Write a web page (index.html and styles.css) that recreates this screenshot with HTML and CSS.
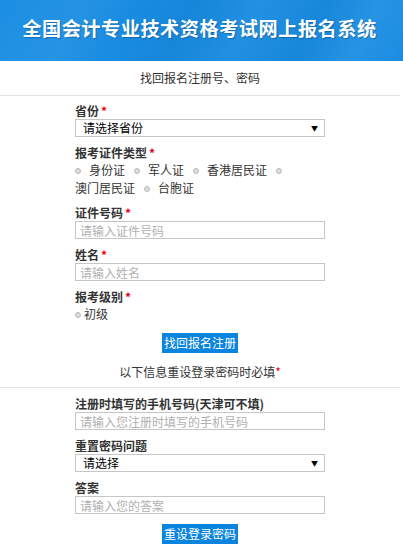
FILE: index.html
```html
<!DOCTYPE html>
<html lang="zh-CN">
<head>
<meta charset="utf-8">
<title>全国会计专业技术资格考试网上报名系统</title>
<link rel="stylesheet" href="styles.css">
</head>
<body>
<header class="top">
  <h1 class="title">全国会计专业技术资格考试网上报名系统</h1>
</header>
<main class="page">
  <div class="subtitle">找回报名注册号、密码</div>
  <form class="form">
    <div class="group">
      <div class="label">省份<span class="req">*</span></div>
      <div class="sel"><select class="field select"><option>请选择省份</option></select></div>
    </div>
    <div class="group">
      <div class="label">报考证件类型<span class="req">*</span></div>
      <div class="radios"><input class="rd" type="radio" name="t"><span class="opt">身份证</span><input class="rd" type="radio" name="t"><span class="opt">军人证</span><input class="rd" type="radio" name="t"><span class="opt">香港居民证</span><input class="rd" type="radio" name="t"><span class="opt">澳门居民证</span><input class="rd" type="radio" name="t"><span class="opt">台胞证</span></div>
    </div>
    <div class="group">
      <div class="label">证件号码<span class="req">*</span></div>
      <input class="field input" type="text" placeholder="请输入证件号码">
    </div>
    <div class="group">
      <div class="label">姓名<span class="req">*</span></div>
      <input class="field input" type="text" placeholder="请输入姓名">
    </div>
    <div class="group">
      <div class="label">报考级别<span class="req">*</span></div>
      <div class="radios"><input class="rd rd-tight" type="radio" name="l"><span class="opt">初级</span></div>
    </div>
    <div class="actions"><button class="btn" type="button">找回报名注册</button></div>
  </form>
  <div class="note">以下信息重设登录密码时必填<span class="req req-tight">*</span></div>
  <form class="form form-second">
    <div class="group">
      <div class="label">注册时填写的手机号码(天津可不填)</div>
      <input class="field input" type="text" placeholder="请输入您注册时填写的手机号码">
    </div>
    <div class="group">
      <div class="label">重置密码问题</div>
      <div class="sel"><select class="field select"><option>请选择</option></select></div>
    </div>
    <div class="group">
      <div class="label">答案</div>
      <input class="field input" type="text" placeholder="请输入您的答案">
    </div>
    <div class="actions"><button class="btn" type="button">重设登录密码</button></div>
  </form>
</main>
</body>
</html>
```
FILE: styles.css
```css
* { box-sizing: border-box; }
html, body { margin: 0; padding: 0; background: #fff; }
body {
  font-family: "Noto Sans CJK SC", "Noto Sans", sans-serif;
  font-size: 12px;
  color: #333;
}
.top {
  height: 61px;
  background:
    linear-gradient(118deg, rgba(255,255,255,0) 0%, rgba(255,255,255,0.05) 20%, rgba(255,255,255,0) 32%, rgba(0,0,0,0.03) 45%, rgba(255,255,255,0.05) 60%, rgba(0,0,0,0.03) 75%, rgba(255,255,255,0.06) 88%, rgba(255,255,255,0) 100%),
    linear-gradient(90deg, #1c8fe3 0%, #168ae0 50%, #1a8de2 100%);
  display: flex;
  justify-content: center;
  padding-top: 13px;
}
.title {
  margin: 0;
  color: #fff;
  font-size: 19.2px;
  letter-spacing: 0.5px;
  line-height: 30px;
  font-weight: bold;
  text-shadow: 1px 1px 1px rgba(0, 40, 90, 0.35);
  padding-right: 4px;
}
.page { width: 400px; }
.subtitle {
  height: 35px;
  line-height: 34px;
  text-align: center;
  border-bottom: 1px solid #e4e4e4;
  color: #333;
}
.form { width: 250px; margin: 0 75px; padding-top: 7px; }
.form-second { padding-top: 8px; }
.group { margin-bottom: 8px; }
.label {
  font-weight: bold;
  line-height: 16px;
  color: #333;
}
.req { color: #e60012; font-weight: bold; margin-left: 2px; }
.req-tight { margin-left: 0; font-weight: normal; }
.field {
  display: block;
  width: 250px;
  height: 18px;
  border: 1px solid #c6c6c6;
  font-family: inherit;
  font-size: 12px;
  margin: 0;
  background: #fff;
  outline: none;
}
.input { padding: 0 4px; color: #333; }
.input::placeholder { color: #b0b0b0; }
.sel { position: relative; }
.select {
  -webkit-appearance: none;
  appearance: none;
  padding: 0 0 0 7px;
  color: #000;
  line-height: 16px;
  border-radius: 0;
}
.sel::after {
  content: "▼";
  position: absolute;
  right: 7px;
  top: 4px;
  font-size: 7px;
  line-height: 10px;
  color: #000;
  pointer-events: none;
}
.radios { line-height: 18px; }
.rd {
  -webkit-appearance: none;
  appearance: none;
  display: inline-block;
  width: 6px;
  height: 6px;
  border-radius: 50%;
  border: 1px solid #b8b8b8;
  background: #dcdcdc;
  margin: 0 8px 0 0;
  vertical-align: middle;
  position: relative;
  top: -1px;
}
.rd-tight { margin-right: 3px; }
.opt { white-space: nowrap; margin-right: 9px; }
.actions {
  display: flex;
  justify-content: center;
  padding-top: 2px;
}
.btn {
  background: #0a84de;
  color: #fff;
  border: 0;
  border-radius: 0;
  font-family: inherit;
  font-size: 12px;
  line-height: 20px;
  height: 20px;
  padding: 0 2px;
  margin: 0;
}
.note {
  text-align: center;
  line-height: 16px;
  padding: 11px 0 7px;
  border-bottom: 1px solid #e4e4e4;
  color: #333;
}
```
